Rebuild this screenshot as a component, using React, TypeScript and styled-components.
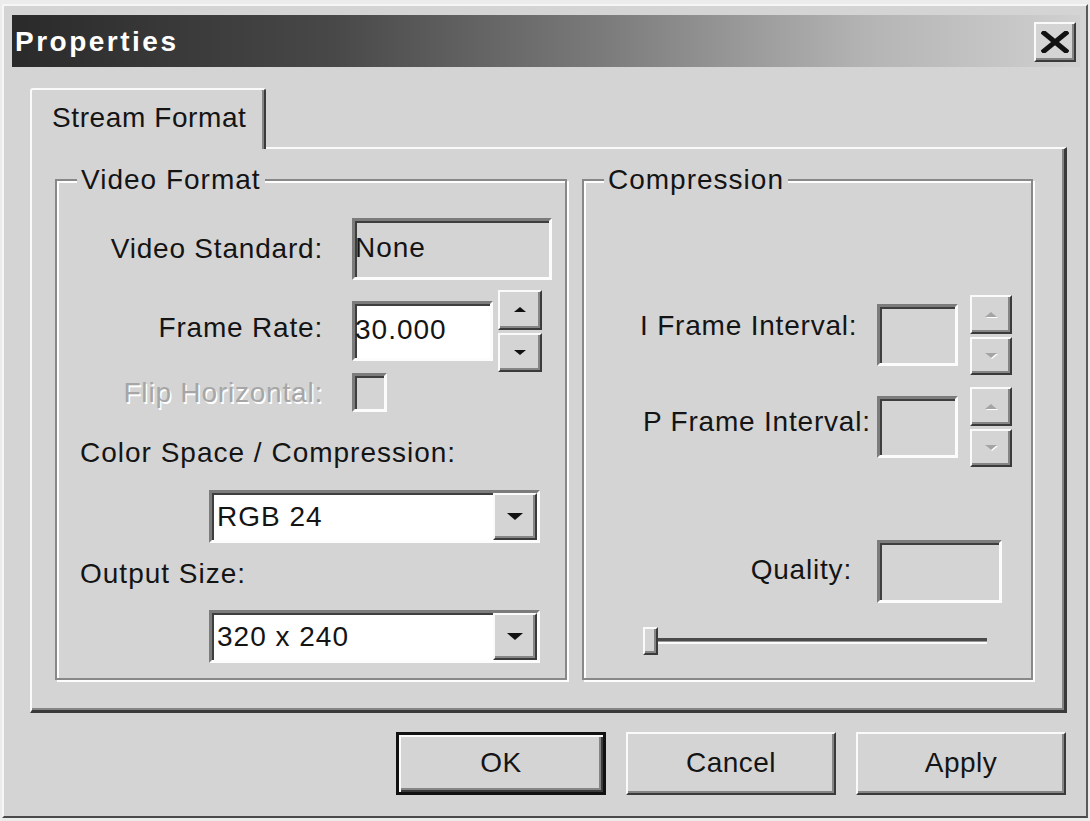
import styled, { createGlobalStyle, css } from 'styled-components';

const GlobalStyle = createGlobalStyle`
	html, body {
		margin: 0;
		padding: 0;
		background: #ececec;
	}
	body {
		font-family: 'Liberation Sans', Arial, sans-serif;
		color: #141414;
	}
	* {
		box-sizing: border-box;
	}
`;

const raised = css`
	border: 2px solid;
	border-color: #fafafa #3a3a3a #3a3a3a #fafafa;
	box-shadow: inset -2px -2px 0 #858585;
	background: #d4d4d4;
`;

const sunken = css`
	border: 3px solid;
	border-color: #7c7c7c #fcfcfc #fcfcfc #7c7c7c;
	box-shadow: inset 2px 2px 0 #3e3e3e;
`;

const Window = styled.div`
	width: 1086px;
	height: 814px;
	margin: 4px 0 0 2px;
	padding: 9px 6px 0 8px;
	background: #d4d4d4;
	border: 2px solid;
	border-color: #f6f6f6 #5a5a5a #4a4a4a #f6f6f6;
	display: flex;
	flex-direction: column;
`;

const TitleBar = styled.div`
	height: 52px;
	display: flex;
	align-items: center;
	justify-content: space-between;
	padding-left: 3px;
	background: linear-gradient(to right, #2a2a2a 0%, #484848 30%, #7a7a7a 55%, #b4b4b4 80%, #d0d0d0 100%);
`;

const Title = styled.span`
	font-size: 28px;
	font-weight: bold;
	letter-spacing: 2.5px;
	color: #fff;
	padding-top: 2px;
`;

const CloseButton = styled.div`
	${raised};
	width: 42px;
	height: 40px;
	margin: 2px 4px 0 0;
	display: flex;
	align-items: center;
	justify-content: center;
`;

const TabArea = styled.div`
	margin: 21px 13px 0 18px;
	display: flex;
	flex-direction: column;
`;

const Tab = styled.div`
	position: relative;
	z-index: 1;
	width: 236px;
	height: 61px;
	margin-bottom: -2px;
	padding: 0 0 4px 20px;
	background: #d4d4d4;
	border: 2px solid;
	border-bottom: none;
	border-color: #fafafa #3a3a3a transparent #fafafa;
	border-top-left-radius: 3px;
	border-top-right-radius: 3px;
	box-shadow: inset -2px 0 0 #858585;
	display: flex;
	align-items: center;
	font-size: 28px;
	letter-spacing: 0.6px;
`;

const Panel = styled.div`
	height: 566px;
	border: solid;
	border-width: 2px 3px 3px 2px;
	border-color: #fafafa #3a3a3a #3a3a3a #fafafa;
	box-shadow: inset -2px -2px 0 #858585;
	padding: 16px 31px 0 23px;
	display: flex;
	gap: 15px;
`;

const Group = styled.fieldset<{ $width: number }>`
	margin: 0;
	padding: 0;
	min-width: 0;
	width: ${({ $width }) => $width}px;
	height: 515px;
	border: 2px solid #888;
	box-shadow: 2px 2px 0 #fdfdfd, inset 2px 2px 0 #fdfdfd;
	display: flex;
	flex-direction: column;
`;

const Legend = styled.legend`
	margin-left: 20px;
	padding: 0 4px;
	font-size: 28px;
	line-height: 30px;
	letter-spacing: 1px;
	background: #d4d4d4;
`;

const Row = styled.div<{ $top: number; $height: number; $gap?: number }>`
	display: flex;
	align-items: center;
	gap: ${({ $gap }) => $gap ?? 27}px;
	margin-top: ${({ $top }) => $top}px;
	height: ${({ $height }) => $height}px;
`;

const Label = styled.span<{ $width: number; $align?: string; $pad?: number; $lift?: number; $disabled?: boolean }>`
	width: ${({ $width }) => $width}px;
	flex-shrink: 0;
	text-align: ${({ $align }) => $align ?? 'right'};
	padding-left: ${({ $pad }) => $pad ?? 0}px;
	padding-right: ${({ $align }) => ($align === 'left' ? 0 : 2)}px;
	padding-bottom: ${({ $lift }) => $lift ?? 0}px;
	font-size: 28px;
	letter-spacing: 0.8px;
	white-space: nowrap;
	color: ${({ $disabled }) => ($disabled ? '#a6a6a6' : '#141414')};
	text-shadow: ${({ $disabled }) => ($disabled ? '1.5px 1.5px 0 #fff' : 'none')};
`;

const SectionLabel = styled.div<{ $top: number }>`
	margin-top: ${({ $top }) => $top}px;
	padding-left: 23px;
	font-size: 28px;
	line-height: 32px;
	letter-spacing: 1px;
`;

const Field = styled.div<{ $width: number; $height: number; $white?: boolean }>`
	${sunken};
	width: ${({ $width }) => $width}px;
	height: ${({ $height }) => $height}px;
	flex-shrink: 0;
	background: ${({ $white }) => ($white ? '#fff' : '#d4d4d4')};
	display: flex;
	align-items: center;
	padding: 0 0 2px 0;
	font-size: 28px;
	letter-spacing: 1px;
`;

const Spinner = styled.div<{ $width: number }>`
	width: ${({ $width }) => $width}px;
	height: 100%;
	display: flex;
	flex-direction: column;
	gap: 3px;
`;

const SpinButton = styled.div`
	${raised};
	flex: 1;
	display: flex;
	align-items: center;
	justify-content: center;
`;

const Arrow = styled.span<{ $dir: 'up' | 'down'; $size: number; $disabled?: boolean }>`
	width: 0;
	height: 0;
	border-left: ${({ $size }) => $size}px solid transparent;
	border-right: ${({ $size }) => $size}px solid transparent;
	${({ $dir, $size, $disabled }) =>
		$dir === 'up'
			? `border-bottom: ${Math.round($size * 0.9)}px solid ${$disabled ? '#a4a4a4' : '#111'};`
			: `border-top: ${Math.round($size * 0.9)}px solid ${$disabled ? '#a4a4a4' : '#111'};`}
	filter: ${({ $disabled }) => ($disabled ? 'drop-shadow(1px 1px 0 #fff)' : 'none')};
`;

const Combo = styled.div<{ $top: number }>`
	${sunken};
	margin: ${({ $top }) => $top}px 0 0 152px;
	width: 331px;
	height: 53px;
	flex-shrink: 0;
	background: #fff;
	display: flex;
	align-items: center;
	justify-content: space-between;
	padding-left: 5px;
	font-size: 28px;
	letter-spacing: 1px;
`;

const ComboButton = styled.div`
	${raised};
	width: 44px;
	height: 100%;
	display: flex;
	align-items: center;
	justify-content: center;
`;

const Slider = styled.div`
	position: relative;
	margin: 24px 0 0 63px;
	width: 340px;
	height: 28px;
	display: flex;
	align-items: center;
`;

const Track = styled.div`
	width: 100%;
	height: 6px;
	border-top: 3px solid #4a4a4a;
	border-bottom: 2px solid #fbfbfb;
	background: #9a9a9a;
`;

const Thumb = styled.div`
	${raised};
	position: absolute;
	left: -4px;
	top: 0;
	width: 15px;
	height: 28px;
`;

const ButtonBar = styled.div`
	margin: 19px 14px 0 0;
	display: flex;
	justify-content: flex-end;
	gap: 20px;
`;

const Button = styled.div<{ $default?: boolean }>`
	width: 210px;
	height: 63px;
	display: flex;
	align-items: center;
	justify-content: center;
	padding-bottom: 2px;
	font-size: 28px;
	letter-spacing: 0.5px;
	background: #d4d4d4;
	${({ $default }) =>
		$default
			? css`
					border: 3px solid #111;
					box-shadow: inset 2px 2px 0 #fafafa, inset -2px -2px 0 #3a3a3a, inset -4px -4px 0 #858585;
			  `
			: css`
					border: 2px solid;
					border-color: #fafafa #3a3a3a #3a3a3a #fafafa;
					box-shadow: inset -2px -2px 0 #858585;
			  `}
`;

const CloseIcon = () => (
	<svg width='28' height='22' viewBox='0 0 28 22'>
		<path d='M3 2 L25 20 M25 2 L3 20' stroke='#111' strokeWidth='5' strokeLinecap='square' />
	</svg>
);

const SpinControl = ({ width, disabled }: { width: number; disabled?: boolean }) => (
	<Spinner $width={width}>
		<SpinButton>
			<Arrow $dir='up' $size={6} $disabled={disabled} />
		</SpinButton>
		<SpinButton>
			<Arrow $dir='down' $size={6} $disabled={disabled} />
		</SpinButton>
	</Spinner>
);

const App = () => {
	return (
		<>
			<GlobalStyle />
			<Window>
				<TitleBar>
					<Title>Properties</Title>
					<CloseButton>
						<CloseIcon />
					</CloseButton>
				</TitleBar>
				<TabArea>
					<Tab>Stream Format</Tab>
					<Panel>
						<Group $width={512}>
							<Legend>Video Format</Legend>
							<Row $top={23} $height={62}>
								<Label $width={268}>Video Standard:</Label>
								<Field $width={200} $height={62}>
									None
								</Field>
							</Row>
							<Row $top={10} $height={82}>
								<Label $width={268} $lift={6}>
									Frame Rate:
								</Label>
								<Row $top={0} $height={82} $gap={5}>
									<Field $width={141} $height={60} $white>
										30.000
									</Field>
									<SpinControl width={44} />
								</Row>
							</Row>
							<Row $top={1} $height={39}>
								<Label $width={268} $disabled>
									Flip Horizontal:
								</Label>
								<Field $width={35} $height={39} />
							</Row>
							<SectionLabel $top={25}>Color Space / Compression:</SectionLabel>
							<Combo $top={21}>
								RGB 24
								<ComboButton>
									<Arrow $dir='down' $size={8} />
								</ComboButton>
							</Combo>
							<SectionLabel $top={15}>Output Size:</SectionLabel>
							<Combo $top={20}>
								320 x 240
								<ComboButton>
									<Arrow $dir='down' $size={8} />
								</ComboButton>
							</Combo>
						</Group>
						<Group $width={451}>
							<Legend>Compression</Legend>
							<Row $top={100} $height={80} $gap={23}>
								<Label $width={270} $align='left' $pad={56} $lift={18}>
									I Frame Interval:
								</Label>
								<Row $top={0} $height={80} $gap={12}>
									<Field $width={81} $height={62} />
									<SpinControl width={42} disabled />
								</Row>
							</Row>
							<Row $top={12} $height={80} $gap={23}>
								<Label $width={270} $align='left' $pad={59} $lift={10}>
									P Frame Interval:
								</Label>
								<Row $top={0} $height={80} $gap={12}>
									<Field $width={81} $height={62} />
									<SpinControl width={42} disabled />
								</Row>
							</Row>
							<Row $top={73} $height={63} $gap={23}>
								<Label $width={270} $lift={4}>
									Quality:
								</Label>
								<Field $width={125} $height={63} />
							</Row>
							<Slider>
								<Track />
								<Thumb />
							</Slider>
						</Group>
					</Panel>
				</TabArea>
				<ButtonBar>
					<Button $default>OK</Button>
					<Button>Cancel</Button>
					<Button>Apply</Button>
				</ButtonBar>
			</Window>
		</>
	);
};

export default App;
